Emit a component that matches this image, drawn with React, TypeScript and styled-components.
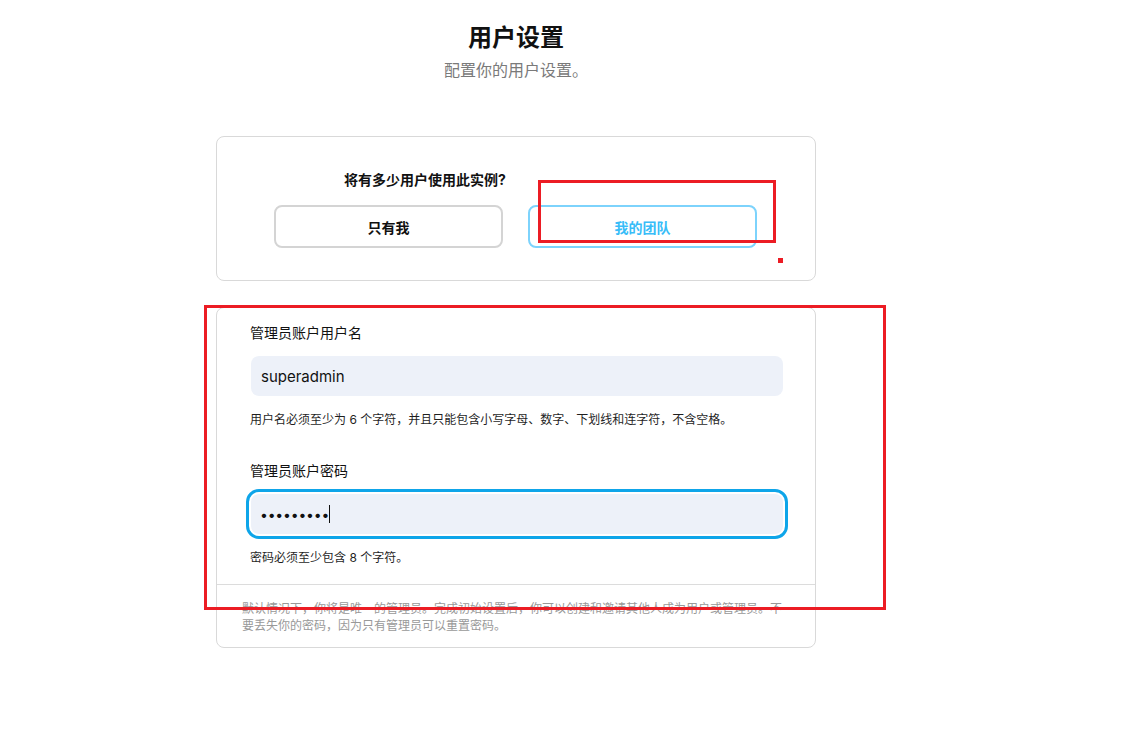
import React from "react";
import styled, { createGlobalStyle } from "styled-components";

const GlobalStyle = createGlobalStyle`
  html, body {
    margin: 0;
    padding: 0;
    background: #ffffff;
  }
  body {
    font-family: Inter, "Noto Sans CJK SC", "Noto Sans", sans-serif;
    color: #111111;
  }
  * { box-sizing: border-box; }
`;

const Page = styled.div`
  position: relative;
  width: 1138px;
  min-height: 739px;
`;

const Column = styled.main`
  width: 600px;
  margin-left: 216px;
  padding-top: 22px;
  display: flex;
  flex-direction: column;
`;

const Header = styled.header`
  display: flex;
  flex-direction: column;
  align-items: center;
  gap: 6px;
`;

const Title = styled.h1`
  margin: 0;
  font-size: 24px;
  line-height: 32px;
  font-weight: 700;
  color: #111111;
`;

const Subtitle = styled.p`
  margin: 0;
  font-size: 16px;
  line-height: 20px;
  color: #7a7a7a;
`;

const Card = styled.section<{ $mt: number }>`
  margin-top: ${(p) => p.$mt}px;
  border: 1px solid #d9d9d9;
  border-radius: 8px;
  background: #ffffff;
  overflow: hidden;
`;

const ChoiceBody = styled.div`
  padding: 34px 57px 32px;
  display: flex;
  flex-direction: column;
  gap: 16px;
`;

const Question = styled.div`
  margin-left: 70px;
  font-size: 14px;
  line-height: 18px;
  font-weight: 700;
  color: #111111;
`;

const ChoiceRow = styled.div`
  display: flex;
  gap: 25px;
`;

const Choice = styled.button<{ $active?: boolean }>`
  width: 229px;
  height: 43px;
  border-radius: 8px;
  border: 2px solid ${(p) => (p.$active ? "#7dd3fc" : "#d4d4d4")};
  background: #ffffff;
  font-family: inherit;
  font-size: 14px;
  font-weight: 700;
  color: ${(p) => (p.$active ? "#38bdf8" : "#111111")};
  cursor: pointer;
  padding: 0;
`;

const FormBody = styled.div`
  padding: 15px 32px 17px 33px;
  display: flex;
  flex-direction: column;
`;

const Label = styled.label<{ $mt?: number }>`
  margin-top: ${(p) => p.$mt ?? 0}px;
  font-size: 14px;
  line-height: 20px;
  color: #111111;
`;

const Field = styled.div<{ $focused?: boolean }>`
  margin-top: 13px;
  margin-left: 1px;
  height: 40px;
  border-radius: 8px;
  background: #edf1f9;
  display: flex;
  align-items: center;
  padding-left: ${(p) => (p.$focused ? 9 : 10)}px;
  font-size: 15px;
  color: #111111;
  outline: ${(p) => (p.$focused ? "3px solid #0ea5e9" : "none")};
  outline-offset: 2px;
`;

const Dots = styled.span`
  font-size: 14px;
  letter-spacing: -0.2px;
  color: #111111;
`;

const Caret = styled.span`
  display: inline-block;
  width: 1px;
  height: 18px;
  background: #111111;
`;

const Help = styled.p<{ $mt: number }>`
  margin: ${(p) => p.$mt}px 0 0;
  font-size: 12px;
  line-height: 18px;
  color: #1f1f1f;
`;

const Divider = styled.hr`
  margin: 0;
  border: none;
  border-top: 1px solid #dcdcdc;
`;

const Footer = styled.p`
  margin: 0;
  padding: 15px 25px 13px;
  font-size: 12px;
  line-height: 17px;
  color: #999999;
`;

const Mark = styled.div<{ $l: number; $t: number; $w: number; $h: number }>`
  position: absolute;
  left: ${(p) => p.$l}px;
  top: ${(p) => p.$t}px;
  width: ${(p) => p.$w}px;
  height: ${(p) => p.$h}px;
  border: 3px solid #ec1c24;
  pointer-events: none;
`;

const Dot = styled.div`
  position: absolute;
  left: 778px;
  top: 258px;
  width: 5px;
  height: 5px;
  background: #ec1c24;
`;

export default function App() {
  return (
    <Page>
      <GlobalStyle />
      <Column>
        <Header>
          <Title>用户设置</Title>
          <Subtitle>配置你的用户设置。</Subtitle>
        </Header>

        <Card $mt={56}>
          <ChoiceBody>
            <Question>将有多少用户使用此实例?</Question>
            <ChoiceRow>
              <Choice>只有我</Choice>
              <Choice $active>我的团队</Choice>
            </ChoiceRow>
          </ChoiceBody>
        </Card>

        <Card $mt={26}>
          <FormBody>
            <Label>管理员账户用户名</Label>
            <Field>superadmin</Field>
            <Help $mt={15}>
              用户名必须至少为 6 个字符，并且只能包含小写字母、数字、下划线和连字符，不含空格。
            </Help>
            <Label $mt={32}>管理员账户密码</Label>
            <Field $focused>
              <Dots>•••••••••</Dots>
              <Caret />
            </Field>
            <Help $mt={15}>密码必须至少包含 8 个字符。</Help>
          </FormBody>
          <Divider />
          <Footer>
            默认情况下，你将是唯一的管理员。完成初始设置后，你可以创建和邀请其他人成为用户或管理员。不要丢失你的密码，因为只有管理员可以重置密码。
          </Footer>
        </Card>
      </Column>

      <Mark $l={538} $t={180} $w={238} $h={63} />
      <Dot />
      <Mark $l={204} $t={305} $w={682} $h={305} />
    </Page>
  );
}
